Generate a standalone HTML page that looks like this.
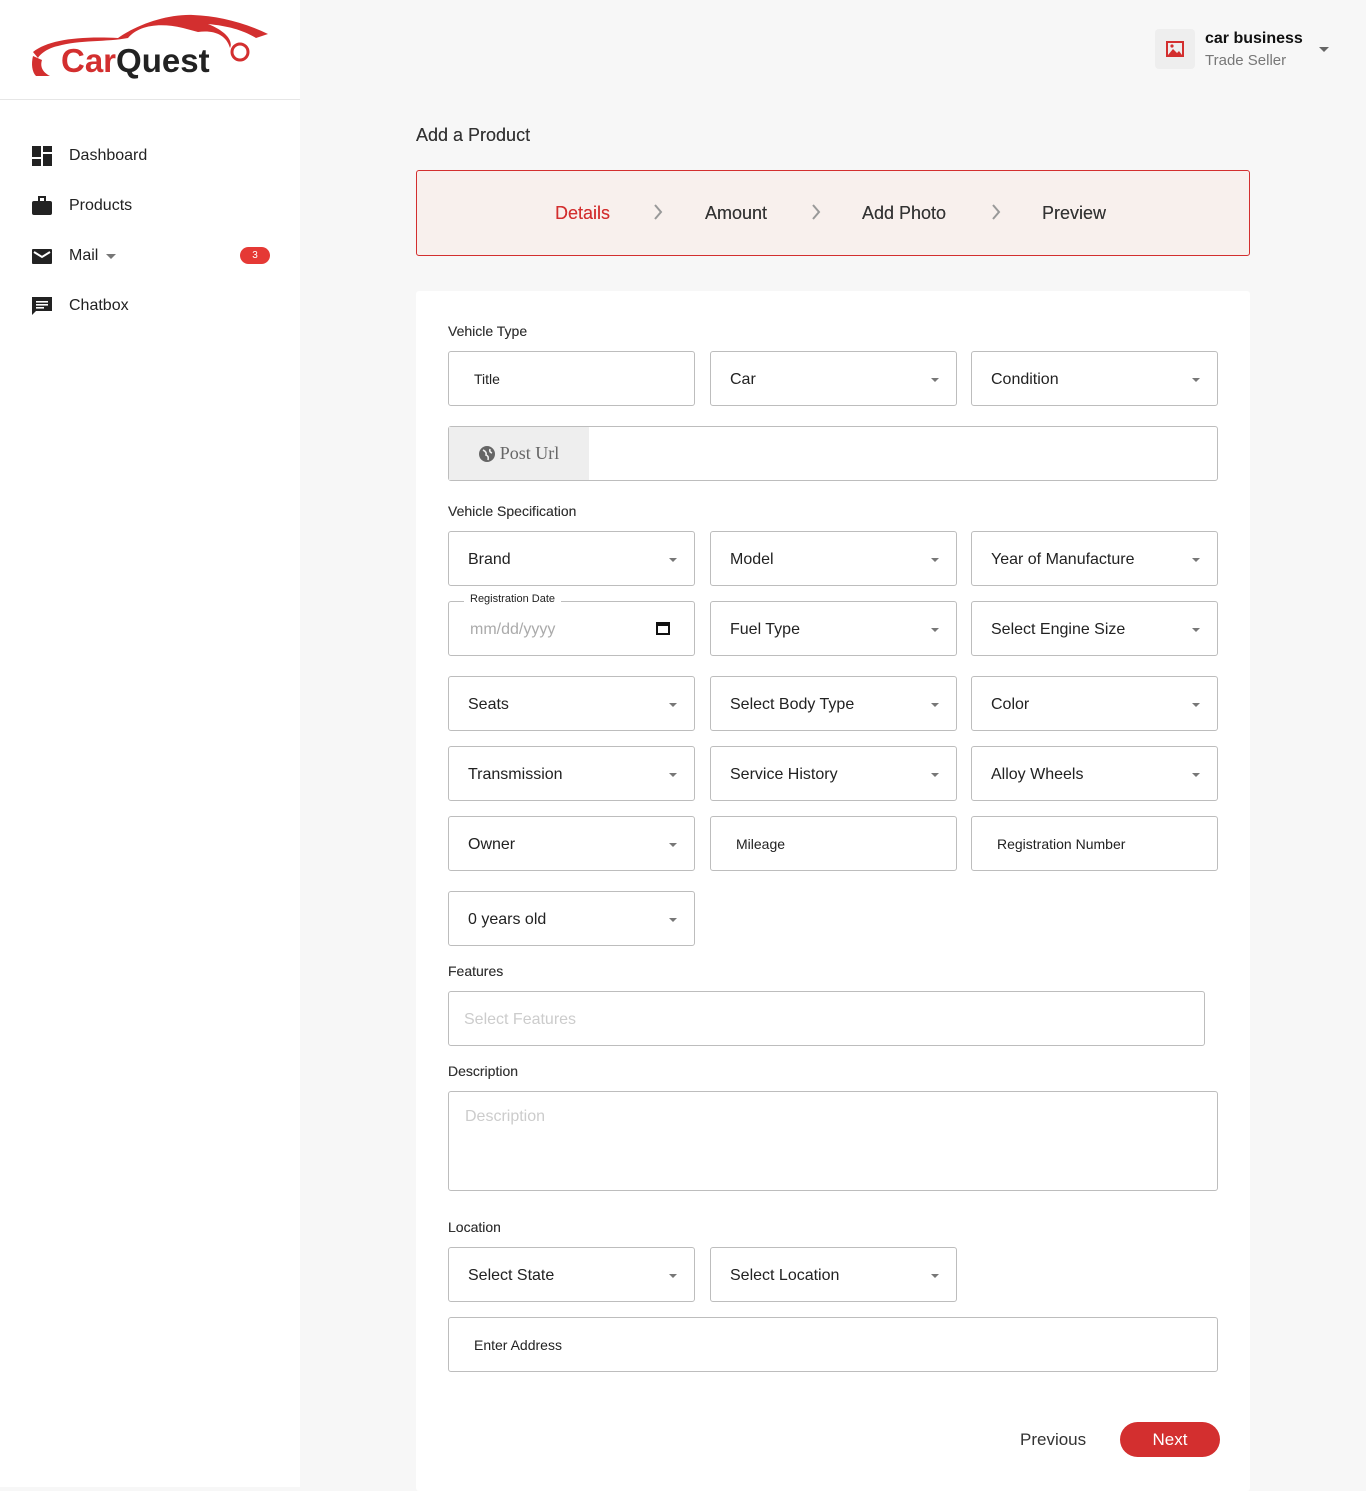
<!DOCTYPE html>
<html><head><meta charset="utf-8"><style>
*{box-sizing:border-box;margin:0;padding:0}
body{width:1366px;height:1487px;background:#f7f7f7;font-family:"Liberation Sans",Arial,sans-serif;color:#222;position:relative;overflow:hidden}
.abs{position:absolute}
.side{left:0;top:0;width:300px;height:1487px;background:#fff}
.nav{left:32px;font-size:16px;color:#222;display:flex;align-items:center}
.nav span{margin-left:17px}
.f{position:absolute;height:55px;width:247px;border:1px solid #bdbdbd;border-radius:3px;background:#fff;display:flex;align-items:center;padding-left:19px;padding-top:2px;font-size:16px;color:#222}
.f.sel::after{content:"";position:absolute;right:17px;top:26px;border-left:4px solid transparent;border-right:4px solid transparent;border-top:4px solid #777}
.f.in{padding-left:25px;font-size:14px;padding-top:0}
.lbl{position:absolute;left:448px;font-size:14px;color:#333;font-weight:500;text-shadow:0 0 0.3px #333}
.c1{left:448px}.c2{left:710px}.c3{left:971px}
</style></head><body>
<div class="abs side"></div>
<div class="abs" style="left:0;top:99px;width:300px;height:1px;background:#e6e6e6"></div>
<svg class="abs" style="left:28px;top:12px" width="245" height="68" viewBox="0 0 245 68">
<path d="M5 40 C20 28 50 24 90 26 C110 12 140 2 165 3 C190 4 215 10 240 22 L228 26 C215 18 200 14 180 12 C200 20 205 30 202 36 C198 22 185 18 170 20 L155 16 C130 10 110 14 100 26 C80 30 50 28 30 34 C20 36 12 42 10 46 Z" fill="#d32f2f"/>
<path d="M5 44 C3 52 4 60 8 64 L22 64 C14 60 12 54 14 48 Z" fill="#d32f2f"/>
<circle cx="212" cy="40" r="8" fill="none" stroke="#d32f2f" stroke-width="3"/>
<text x="33" y="60" font-family="Liberation Sans,sans-serif" font-weight="bold" font-size="33" fill="#d32f2f">Car<tspan fill="#222">Quest</tspan></text>
</svg>
<div class="abs nav" style="top:146px"><svg width="20" height="20"><rect x="0" y="0" width="9" height="11" fill="#222"/><rect x="11" y="0" width="9" height="6" fill="#222"/><rect x="0" y="13" width="9" height="7" fill="#222"/><rect x="11" y="8" width="9" height="12" fill="#222"/></svg><span>Dashboard</span></div>
<div class="abs nav" style="top:196px"><svg width="20" height="20"><rect x="0" y="5" width="20" height="14" rx="2" fill="#222"/><rect x="7" y="1" width="6" height="5" fill="none" stroke="#222" stroke-width="2"/></svg><span>Products</span></div>
<div class="abs nav" style="top:246px"><svg width="20" height="20"><rect x="0" y="3" width="20" height="15" rx="1" fill="#222"/><path d="M2 6 L10 11 L18 6" stroke="#fff" stroke-width="2" fill="none"/></svg><span>Mail</span><span style="margin-left:8px;width:0;height:0;border-left:5px solid transparent;border-right:5px solid transparent;border-top:5px solid #777"></span></div>
<div class="abs" style="left:240px;top:247px;width:30px;height:17px;border-radius:9px;background:#e53935;color:#fff;font-size:10px;text-align:center;line-height:17px">3</div>
<div class="abs nav" style="top:296px"><svg width="20" height="20"><path d="M0 1 H20 V15 H4 L0 19 Z" fill="#222"/><rect x="4" y="5" width="12" height="1.6" fill="#fff"/><rect x="4" y="8" width="12" height="1.6" fill="#fff"/><rect x="4" y="11" width="8" height="1.6" fill="#fff"/></svg><span>Chatbox</span></div>

<div class="abs" style="left:1155px;top:29px;width:40px;height:40px;background:#eee;border-radius:4px"></div>
<svg class="abs" style="left:1166px;top:41px" width="18" height="16"><rect x="1" y="1" width="16" height="14" fill="none" stroke="#d32f2f" stroke-width="2"/><path d="M2 14 L7 8 L11 12 L13 10 L16 14 Z" fill="#d32f2f"/><circle cx="6" cy="5" r="1.6" fill="#d32f2f"/></svg>
<div class="abs" style="left:1205px;top:30px;font-size:16px;font-weight:bold;color:#111">car business</div>
<div class="abs" style="left:1205px;top:52px;font-size:15px;color:#777">Trade Seller</div>
<div class="abs" style="left:1319px;top:47px;border-left:5px solid transparent;border-right:5px solid transparent;border-top:5px solid #666"></div>

<div class="abs" style="left:416px;top:125px;font-size:18px;color:#333;text-shadow:0 0 0.3px #333">Add a Product</div>
<div class="abs" style="left:416px;top:170px;width:834px;height:86px;background:#f8f0ed;border:1px solid #d32f2f;border-radius:3px"></div>
<div class="abs" style="left:555px;top:203px;font-size:18px;color:#d32f2f;text-shadow:0 0 0.3px #d32f2f">Details</div>
<div class="abs" style="left:705px;top:203px;font-size:18px;color:#333;text-shadow:0 0 0.3px #333">Amount</div>
<div class="abs" style="left:862px;top:203px;font-size:18px;color:#333;text-shadow:0 0 0.3px #333">Add Photo</div>
<div class="abs" style="left:1042px;top:203px;font-size:18px;color:#333;text-shadow:0 0 0.3px #333">Preview</div>
<svg class="abs" style="left:652px;top:203px" width="12" height="18"><path d="M3 2 L9 9 L3 16" stroke="#999" stroke-width="2" fill="none"/></svg>
<svg class="abs" style="left:810px;top:203px" width="12" height="18"><path d="M3 2 L9 9 L3 16" stroke="#999" stroke-width="2" fill="none"/></svg>
<svg class="abs" style="left:990px;top:203px" width="12" height="18"><path d="M3 2 L9 9 L3 16" stroke="#999" stroke-width="2" fill="none"/></svg>

<div class="abs" style="left:416px;top:291px;width:834px;height:1200px;background:#fff;border-radius:3px"></div>

<div class="lbl" style="top:323px">Vehicle Type</div>
<div class="f in c1" style="top:351px">Title</div>
<div class="f sel c2" style="top:351px">Car</div>
<div class="f sel c3" style="top:351px">Condition</div>
<div class="f" style="left:448px;top:426px;width:770px;padding:0"><div style="width:140px;height:53px;background:#eee;display:flex;align-items:center;justify-content:center;font-family:'Liberation Serif',serif;font-size:18px;color:#666"><svg width="16" height="16" style="margin-right:5px"><circle cx="8" cy="8" r="8" fill="#666"/><path d="M4 4 Q8 6 7 9 Q10 10 9 14 M11 3 Q10 6 13 7" stroke="#eee" stroke-width="1.6" fill="none"/></svg>Post Url</div></div>

<div class="lbl" style="top:503px">Vehicle Specification</div>
<div class="f sel c1" style="top:531px">Brand</div>
<div class="f sel c2" style="top:531px">Model</div>
<div class="f sel c3" style="top:531px">Year of Manufacture</div>
<div class="f c1" style="top:601px;padding-left:21px;color:#aaa">mm/dd/yyyy<svg style="position:absolute;right:24px;top:19px" width="14" height="14"><rect x="1" y="2" width="12" height="11" fill="none" stroke="#111" stroke-width="2"/><rect x="1" y="2" width="12" height="3" fill="#111"/></svg></div>
<div class="abs" style="left:464px;top:593px;background:#fff;padding:0 6px;font-size:11px;color:#222">Registration Date</div>
<div class="f sel c2" style="top:601px">Fuel Type</div>
<div class="f sel c3" style="top:601px">Select Engine Size</div>
<div class="f sel c1" style="top:676px">Seats</div>
<div class="f sel c2" style="top:676px">Select Body Type</div>
<div class="f sel c3" style="top:676px">Color</div>
<div class="f sel c1" style="top:746px">Transmission</div>
<div class="f sel c2" style="top:746px">Service History</div>
<div class="f sel c3" style="top:746px">Alloy Wheels</div>
<div class="f sel c1" style="top:816px">Owner</div>
<div class="f in c2" style="top:816px">Mileage</div>
<div class="f in c3" style="top:816px">Registration Number</div>
<div class="f sel c1" style="top:891px">0 years old</div>

<div class="lbl" style="top:963px">Features</div>
<div class="f c1" style="top:991px;width:757px;padding-left:15px;color:#ccc">Select Features</div>
<div class="lbl" style="top:1063px">Description</div>
<div class="f c1" style="top:1091px;width:770px;height:100px;align-items:flex-start;padding:16px 0 0 16px;color:#ccc">Description</div>

<div class="lbl" style="top:1219px">Location</div>
<div class="f sel c1" style="top:1247px">Select State</div>
<div class="f sel c2" style="top:1247px">Select Location</div>
<div class="f in c1" style="top:1317px;width:770px">Enter Address</div>

<div class="abs" style="left:1020px;top:1430px;font-size:17px;color:#333">Previous</div>
<div class="abs" style="left:1120px;top:1422px;width:100px;height:35px;border-radius:18px;background:#d32f2f;color:#fff;font-size:17px;text-align:center;line-height:35px">Next</div>
</body></html>
